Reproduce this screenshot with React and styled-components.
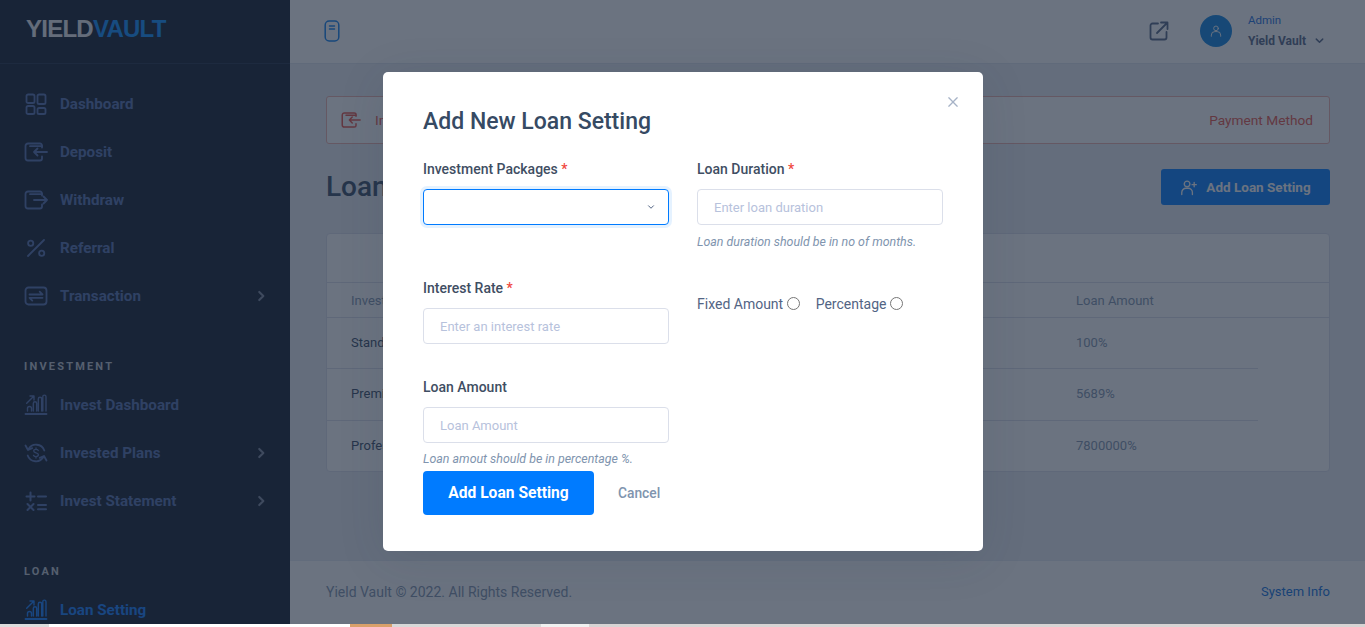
import React from 'react';
import styled, { createGlobalStyle } from 'styled-components';

const Global = createGlobalStyle`
  html, body { margin: 0; padding: 0; height: 100%; overflow: hidden; background: #d8d8d8; }
  body { font-family: Roboto, "Liberation Sans", sans-serif; }
  * { box-sizing: border-box; }
`;

const Viewport = styled.div`
  position: relative;
  height: 624px;
  display: flex;
  overflow: hidden;
  background: #e9ecf3;
`;

/* ---------- sidebar ---------- */
const Sidebar = styled.aside`
  width: 290px;
  flex: none;
  height: 100%;
  background: #0d192b;
  overflow: hidden;
`;
const LogoBar = styled.div`
  height: 64px;
  padding-left: 26px;
  display: flex;
  align-items: center;
  border-bottom: 1px solid #1c2a40;
  font-family: "Liberation Sans", Arial, sans-serif;
  font-size: 24px;
  font-weight: 700;
  letter-spacing: -0.75px;
  color: #e9ebee;
  padding-bottom: 6px;
`;
const LogoAccent = styled.span`
  color: #0a8cff;
`;
const Nav = styled.nav`
  padding-top: 16px;
`;
const SectionLabel = styled.div`
  height: 16px;
  line-height: 16px;
  margin: ${p => p.$top}px 0 6px;
  padding-left: 24px;
  font-size: 11px;
  font-weight: 700;
  letter-spacing: 2.2px;
  color: #bec4cd;
`;
const NavItem = styled.a`
  height: 48px;
  display: flex;
  align-items: center;
  gap: 12px;
  padding: 0 24px;
  font-size: 15.2px;
  font-weight: 700;
  color: ${p => (p.$active ? '#0f7bff' : '#516ead')};
`;
const NavLabel = styled.span`
  flex: 1;
`;
const IconSvg = styled.svg`
  flex: none;
  display: block;
  fill: none;
  stroke: currentColor;
  stroke-linecap: round;
  stroke-linejoin: round;
`;

const Icon = ({ size = 24, w, sw = 1.8, children, view = '0 0 24 24' }) => (
  <IconSvg width={w || size} height={size} viewBox={view} strokeWidth={sw}>{children}</IconSvg>
);

const DashIcon = () => (
  <Icon>
    <rect x="2.500" y="2.500" width="8" height="8.500" rx="1.600" />
    <rect x="13.500" y="2.500" width="8" height="9.500" rx="1.600" />
    <rect x="2.500" y="14" width="8" height="8" rx="1.600" />
    <rect x="13.500" y="16" width="8" height="6" rx="1.600" />
  </Icon>
);
const Wallet = () => (
  <>
    <path d="M18 7.500V5.500a2 2 0 0 0-2-2H4a2.500 2.500 0 0 0-2.500 2.500v12A2.500 2.500 0 0 0 4 20.500h12a2 2 0 0 0 2-2V16.500" />
    <path d="M6 6.200h12" />
  </>
);
const DepositIcon = ({ size }) => (
  <Icon size={size}><Wallet /><path d="M23 12H10M13.500 8.500 10 12l3.500 3.500" /></Icon>
);
const WithdrawIcon = () => (
  <Icon><Wallet /><path d="M10 12h13M19.500 8.500 23 12l-3.500 3.500" /></Icon>
);
const PercentIcon = () => (
  <Icon>
    <path d="M4 20 20 4" />
    <circle cx="6.700" cy="7.300" r="2.600" />
    <circle cx="17.700" cy="17.300" r="2.600" />
  </Icon>
);
const TransactionIcon = () => (
  <Icon>
    <rect x="1.500" y="3.500" width="21" height="17" rx="3" />
    <path d="M5.500 10.500h13l-2.800-2.800M18.500 13.800h-13l2.800 2.800" />
  </Icon>
);
const ChartIcon = () => (
  <Icon sw={1.400}>
    <path d="M1.500 21h21" strokeWidth="1.800" />
    <path d="M3.500 18v-2.500a2 2 0 0 1 4 0V18M9.300 18v-7.500a1.700 1.700 0 0 1 3.400 0V18M14.300 18V6a1.700 1.700 0 0 1 3.400 0v12M18.800 18V3.700a1.600 1.600 0 0 1 3.200 0V18" />
    <path d="M2.700 10.300 9.500 3.500M6 3h4v4" />
  </Icon>
);
const PlansIcon = () => (
  <Icon>
    <path d="M4.500 8.200A8.700 8.700 0 0 1 20.300 9.500M19.500 15.800A8.700 8.700 0 0 1 3.700 14.500" />
    <path d="M1.500 4.500 4 9l4.200-1.800M22.500 19.500 20 15l-4.200 1.800" />
    <path d="M14.300 9.500c-.5-.8-1.300-1.100-2.300-1.100-1.300 0-2.300.6-2.300 1.700 0 2.300 4.700 1.200 4.700 3.700 0 1.100-1.100 1.800-2.400 1.800-1.100 0-2-.4-2.500-1.200M12 7v1.400M12 15.600V17" strokeWidth="1.300" />
  </Icon>
);
const StatementIcon = () => (
  <Icon sw={2}>
    <path d="M2.500 7.500h8M6.500 3.500v8M14 7.500h8M3.500 15l6 6M9.500 15l-6 6M14 16h8M14 20.200h8" />
  </Icon>
);
const Chevron = styled(IconSvg)`
  color: #7d879c;
  margin-right: -2px;
`;
const NavChevron = () => (
  <Chevron width={14} height={14} viewBox="0 0 24 24" strokeWidth={3.6}><path d="M9 5l7 7-7 7" /></Chevron>
);

/* ---------- main ---------- */
const Main = styled.div`
  flex: 1;
  min-width: 0;
  display: flex;
  flex-direction: column;
`;
const TopBar = styled.header`
  height: 64px;
  flex: none;
  display: flex;
  align-items: center;
  justify-content: space-between;
  padding: 0 36px 1px 34px;
  background: #fff;
  border-bottom: 1px solid #dfe3ec;
`;
const MenuIcon = styled.div`
  color: #0a7ff0;
`;
const TopRight = styled.div`
  display: flex;
  align-items: center;
`;
const ExternalLink = styled.div`
  color: #526484;
  margin-right: 31px;
`;
const Avatar = styled.div`
  width: 32px;
  height: 32px;
  border-radius: 50%;
  background: #0a82e0;
  color: #fff;
  display: flex;
  align-items: center;
  justify-content: center;
  margin-right: 16px;
`;
const UserBlock = styled.div`
  width: 81px;
`;
const UserRole = styled.div`
  font-size: 11.500px;
  line-height: 14px;
  color: #1a6fe0;
  margin: -1px 0 6px;
`;
const UserName = styled.div`
  font-size: 12px;
  line-height: 16px;
  font-weight: 700;
  color: #526484;
  display: flex;
  align-items: center;
  gap: 8px;
`;
const Content = styled.main`
  flex: 1;
  padding: 32px 35px 0 36px;
`;
const Alert = styled.div`
  height: 48px;
  display: flex;
  align-items: center;
  padding: 0 16px 0 14px;
  gap: 14px;
  background: #fff;
  border: 1px solid #eeb0ab;
  border-radius: 3px;
  color: #e85347;
  font-size: 13.700px;
`;
const AlertText = styled.span`
  flex: 1;
`;
const PageHead = styled.div`
  height: 36px;
  margin: 25px 0 28px;
  display: flex;
  align-items: center;
  justify-content: space-between;
`;
const PageTitle = styled.h2`
  margin: 0;
  font-size: 28px;
  line-height: 36px;
  font-weight: 500;
  color: #364a63;
`;
const HeadButton = styled.button`
  height: 36px;
  width: 169px;
  display: flex;
  align-items: center;
  justify-content: center;
  gap: 9px;
  border: 0;
  border-radius: 3px;
  background: #007bff;
  color: #fff;
  font-family: inherit;
  font-size: 13.500px;
  font-weight: 700;
  padding: 0;
`;
const Card = styled.section`
  height: 239px;
  background: #fff;
  border: 1px solid #dbdfea;
  border-radius: 4px;
  overflow: hidden;
`;
const CardBlank = styled.div`
  height: 49px;
  border-bottom: 1px solid #dbdfea;
`;
const Row = styled.div`
  display: grid;
  grid-template-columns: 725px 1fr;
  padding-left: 24px;
  align-items: center;
`;
const HeadRow = styled(Row)`
  height: 35px;
  border-bottom: 1px solid #dbdfea;
  font-size: 13px;
  color: #8094ae;
`;
const BodyRow = styled(Row)`
  width: 931px;
  height: ${p => p.$h}px;
  font-size: 13px;
  border-bottom: ${p => (p.$last ? '0' : '1px solid #dbdfea')};
  padding-bottom: 2px;
`;
const PlanName = styled.span`
  color: #364a63;
`;
const PlanAmount = styled.span`
  color: #8094ae;
`;
const Footer = styled.footer`
  height: 64px;
  flex: none;
  display: flex;
  align-items: center;
  justify-content: space-between;
  padding: 0 35px 2px 36px;
  background: #fff;
  border-top: 1px solid #e5e9f2;
  font-size: 14px;
  color: #8094ae;
`;
const FootLink = styled.a`
  color: #0a6fe0;
  font-size: 13px;
`;

/* ---------- modal ---------- */
const Backdrop = styled.div`
  position: absolute;
  inset: 0;
  display: flex;
  justify-content: center;
  align-items: flex-start;
  padding: 72px 0 0 1px;
  background: rgba(31, 42, 62, 0.66);
`;
const Modal = styled.div`
  position: relative;
  width: 600px;
  height: 479px;
  padding: 36px 40px 36px;
  background: #fff;
  border-radius: 5px;
  box-shadow: 0 8px 48px rgba(43, 55, 72, 0.12);
`;
const CloseButton = styled.button`
  position: absolute;
  top: 25px;
  right: 25px;
  width: 10px;
  height: 10px;
  padding: 0;
  border: 0;
  background: none;
  color: #a7b3c7;
  display: flex;
`;
const ModalTitle = styled.h4`
  margin: 0 0 23px;
  font-size: 23px;
  line-height: 28px;
  font-weight: 500;
  color: #364a63;
`;
const FormGrid = styled.div`
  display: grid;
  grid-template-columns: 246px 246px;
  column-gap: 28px;
`;
const Column = styled.div`
  display: flex;
  flex-direction: column;
`;
const Field = styled.div`
  margin-bottom: ${p => p.$after || 0}px;
`;
const Label = styled.label`
  display: block;
  height: 20px;
  line-height: 20px;
  margin-bottom: 10px;
  font-size: 14px;
  font-weight: 500;
  color: #3f4e63;
`;
const Star = styled.span`
  color: #f0483e;
`;
const TextInput = styled.input`
  display: block;
  width: 100%;
  height: 36px;
  padding: 0 16px;
  border: 1px solid #dbdfea;
  border-radius: 4px;
  outline: 0;
  font-family: inherit;
  font-size: 13px;
  &::placeholder { color: #b7c2dc; opacity: 1; }
`;
const SelectWrap = styled.div`
  position: relative;
`;
const SelectBox = styled.select`
  display: block;
  width: 100%;
  height: 36px;
  appearance: none;
  background: #fff;
  border: 1px solid #007bff;
  border-radius: 4px;
  box-shadow: 0 0 0 3px rgba(0, 123, 255, 0.1);
  outline: 0;
`;
const SelectArrow = styled.span`
  position: absolute;
  right: 13px;
  top: 13px;
  color: #526484;
  display: flex;
`;
const Hint = styled.div`
  font-size: 12.400px;
  line-height: 18px;
  font-style: italic;
  color: #8094ae;
  margin-top: ${p => p.$top}px;
`;
const RadioRow = styled.div`
  display: flex;
  align-items: center;
  margin-top: 44px;
  height: 18px;
  font-size: 14px;
  color: #526484;
`;
const RadioLabel = styled.label`
  display: flex;
  align-items: center;
  gap: 3.500px;
  margin-right: 16px;
`;
const Radio = styled.input`
  margin: 0 0 2px;
  width: 13px;
  height: 13px;
`;
const Actions = styled.div`
  display: flex;
  align-items: center;
  margin-top: 3px;
`;
const SubmitButton = styled.button`
  width: 171px;
  height: 44px;
  border: 0;
  border-radius: 4px;
  background: #007bff;
  color: #fff;
  font-family: inherit;
  font-size: 15.600px;
  font-weight: 700;
  padding: 0;
`;
const CancelLink = styled.a`
  margin-left: 24px;
  font-size: 13.800px;
  font-weight: 500;
  color: #8094ae;
`;

/* ---------- strip of what lies below the page ---------- */
const BelowStrip = styled.div`
  height: 3px;
  display: flex;
  overflow: hidden;
`;
const Piece = styled.div`
  width: ${p => (p.$w ? `${p.$w}px` : 'auto')};
  flex: ${p => (p.$w ? 'none' : '1')};
  background: ${p => p.$c};
`;

const items = [
  ['Dashboard', DashIcon],
  ['Deposit', DepositIcon],
  ['Withdraw', WithdrawIcon],
  ['Referral', PercentIcon],
  ['Transaction', TransactionIcon, true],
];
const investItems = [
  ['Invest Dashboard', ChartIcon],
  ['Invested Plans', PlansIcon, true],
  ['Invest Statement', StatementIcon, true],
];
const plans = [
  ['Standard', '100%', 51],
  ['Premium', '5689%', 52],
  ['Professional', '7800000%', 50, true],
];

const NavRow = ({ label, Ico, more, active }) => (
  <NavItem $active={active}>
    <Ico />
    <NavLabel>{label}</NavLabel>
    {more && <NavChevron />}
  </NavItem>
);

export default function App() {
  return (
    <>
      <Global />
      <Viewport>
        <Sidebar>
          <LogoBar>YIELD<LogoAccent>VAULT</LogoAccent></LogoBar>
          <Nav>
            {items.map(([l, I, m]) => <NavRow key={l} label={l} Ico={I} more={m} />)}
            <SectionLabel $top={39}>INVESTMENT</SectionLabel>
            {investItems.map(([l, I, m]) => <NavRow key={l} label={l} Ico={I} more={m} />)}
            <SectionLabel $top={39}>LOAN</SectionLabel>
            <NavRow label="Loan Setting" Ico={ChartIcon} active />
          </Nav>
        </Sidebar>
        <Main>
          <TopBar>
            <MenuIcon>
              <Icon size={22} w={16} sw={1.500} view="0 0 16 22">
                <rect x="1.200" y="1" width="13.600" height="20" rx="4" />
                <path d="M5.500 6h5M5.500 9h5" />
              </Icon>
            </MenuIcon>
            <TopRight>
              <ExternalLink>
                <Icon size={20} sw={1.800} view="0 0 20 20">
                  <path d="M9 2.500H3.500a2 2 0 0 0-2 2v12a2 2 0 0 0 2 2h12a2 2 0 0 0 2-2V11" />
                  <path d="M8 12 18 2M12 1.500h6.500V8" />
                </Icon>
              </ExternalLink>
              <Avatar>
                <Icon size={14} sw={1.600}>
                  <circle cx="12" cy="7.500" r="4" />
                  <path d="M4 21v-2a6 6 0 0 1 6-6h4a6 6 0 0 1 6 6v2" />
                </Icon>
              </Avatar>
              <UserBlock>
                <UserRole>Admin</UserRole>
                <UserName>
                  Yield Vault
                  <Icon size={11} sw={3.200}><path d="M5 9l7 7 7-7" /></Icon>
                </UserName>
              </UserBlock>
            </TopRight>
          </TopBar>
          <Content>
            <Alert>
              <DepositIcon size={20} />
              <AlertText>Invest</AlertText>
              Payment Method
            </Alert>
            <PageHead>
              <PageTitle>Loan</PageTitle>
              <HeadButton>
                <Icon size={17} sw={1.900}>
                  <circle cx="10" cy="7" r="4" />
                  <path d="M2.500 22v-3a6 6 0 0 1 6-6h3a6 6 0 0 1 6 6v3M20 5v6M17 8h6" />
                </Icon>
                Add Loan Setting
              </HeadButton>
            </PageHead>
            <Card>
              <CardBlank />
              <HeadRow>
                <span>Invest</span>
                <span>Loan Amount</span>
              </HeadRow>
              {plans.map(([n, a, h, last]) => (
                <BodyRow key={n} $h={h} $last={last}>
                  <PlanName>{n}</PlanName>
                  <PlanAmount>{a}</PlanAmount>
                </BodyRow>
              ))}
            </Card>
          </Content>
          <Footer>
            <span>Yield Vault © 2022. All Rights Reserved.</span>
            <FootLink>System Info</FootLink>
          </Footer>
        </Main>
        <Backdrop>
          <Modal>
            <CloseButton aria-label="Close">
              <Icon size={10} sw={1.600} view="0 0 12 12"><path d="M1 1l10 10M11 1 1 11" /></Icon>
            </CloseButton>
            <ModalTitle>Add New Loan Setting</ModalTitle>
            <FormGrid>
              <Column>
                <Field $after={53}>
                  <Label>Investment Packages <Star>*</Star></Label>
                  <SelectWrap>
                    <SelectBox><option></option></SelectBox>
                    <SelectArrow>
                      <Icon size={10} sw={2.400}><path d="M6 9l6 6 6-6" /></Icon>
                    </SelectArrow>
                  </SelectWrap>
                </Field>
                <Field $after={33}>
                  <Label>Interest Rate <Star>*</Star></Label>
                  <TextInput placeholder="Enter an interest rate" />
                </Field>
                <Field>
                  <Label>Loan Amount</Label>
                  <TextInput placeholder="Loan Amount" />
                  <Hint $top={7}>Loan amout should be in percentage %.</Hint>
                </Field>
              </Column>
              <Column>
                <Field>
                  <Label>Loan Duration <Star>*</Star></Label>
                  <TextInput placeholder="Enter loan duration" />
                  <Hint $top={8}>Loan duration should be in no of months.</Hint>
                </Field>
                <RadioRow>
                  <RadioLabel>Fixed Amount <Radio type="radio" name="kind" /></RadioLabel>
                  <RadioLabel>Percentage <Radio type="radio" name="kind" /></RadioLabel>
                </RadioRow>
              </Column>
            </FormGrid>
            <Actions>
              <SubmitButton>Add Loan Setting</SubmitButton>
              <CancelLink>Cancel</CancelLink>
            </Actions>
          </Modal>
        </Backdrop>
      </Viewport>
      <BelowStrip>
        <Piece $w={49} $c="#dcdcdc" />
        <Piece $w={301} $c="#ffffff" />
        <Piece $w={42} $c="#d9a06a" />
        <Piece $w={149} $c="#d8d8d8" />
        <Piece $w={48} $c="#f0f0f0" />
        <Piece $c="#d8d4d4" />
      </BelowStrip>
    </>
  );
}
